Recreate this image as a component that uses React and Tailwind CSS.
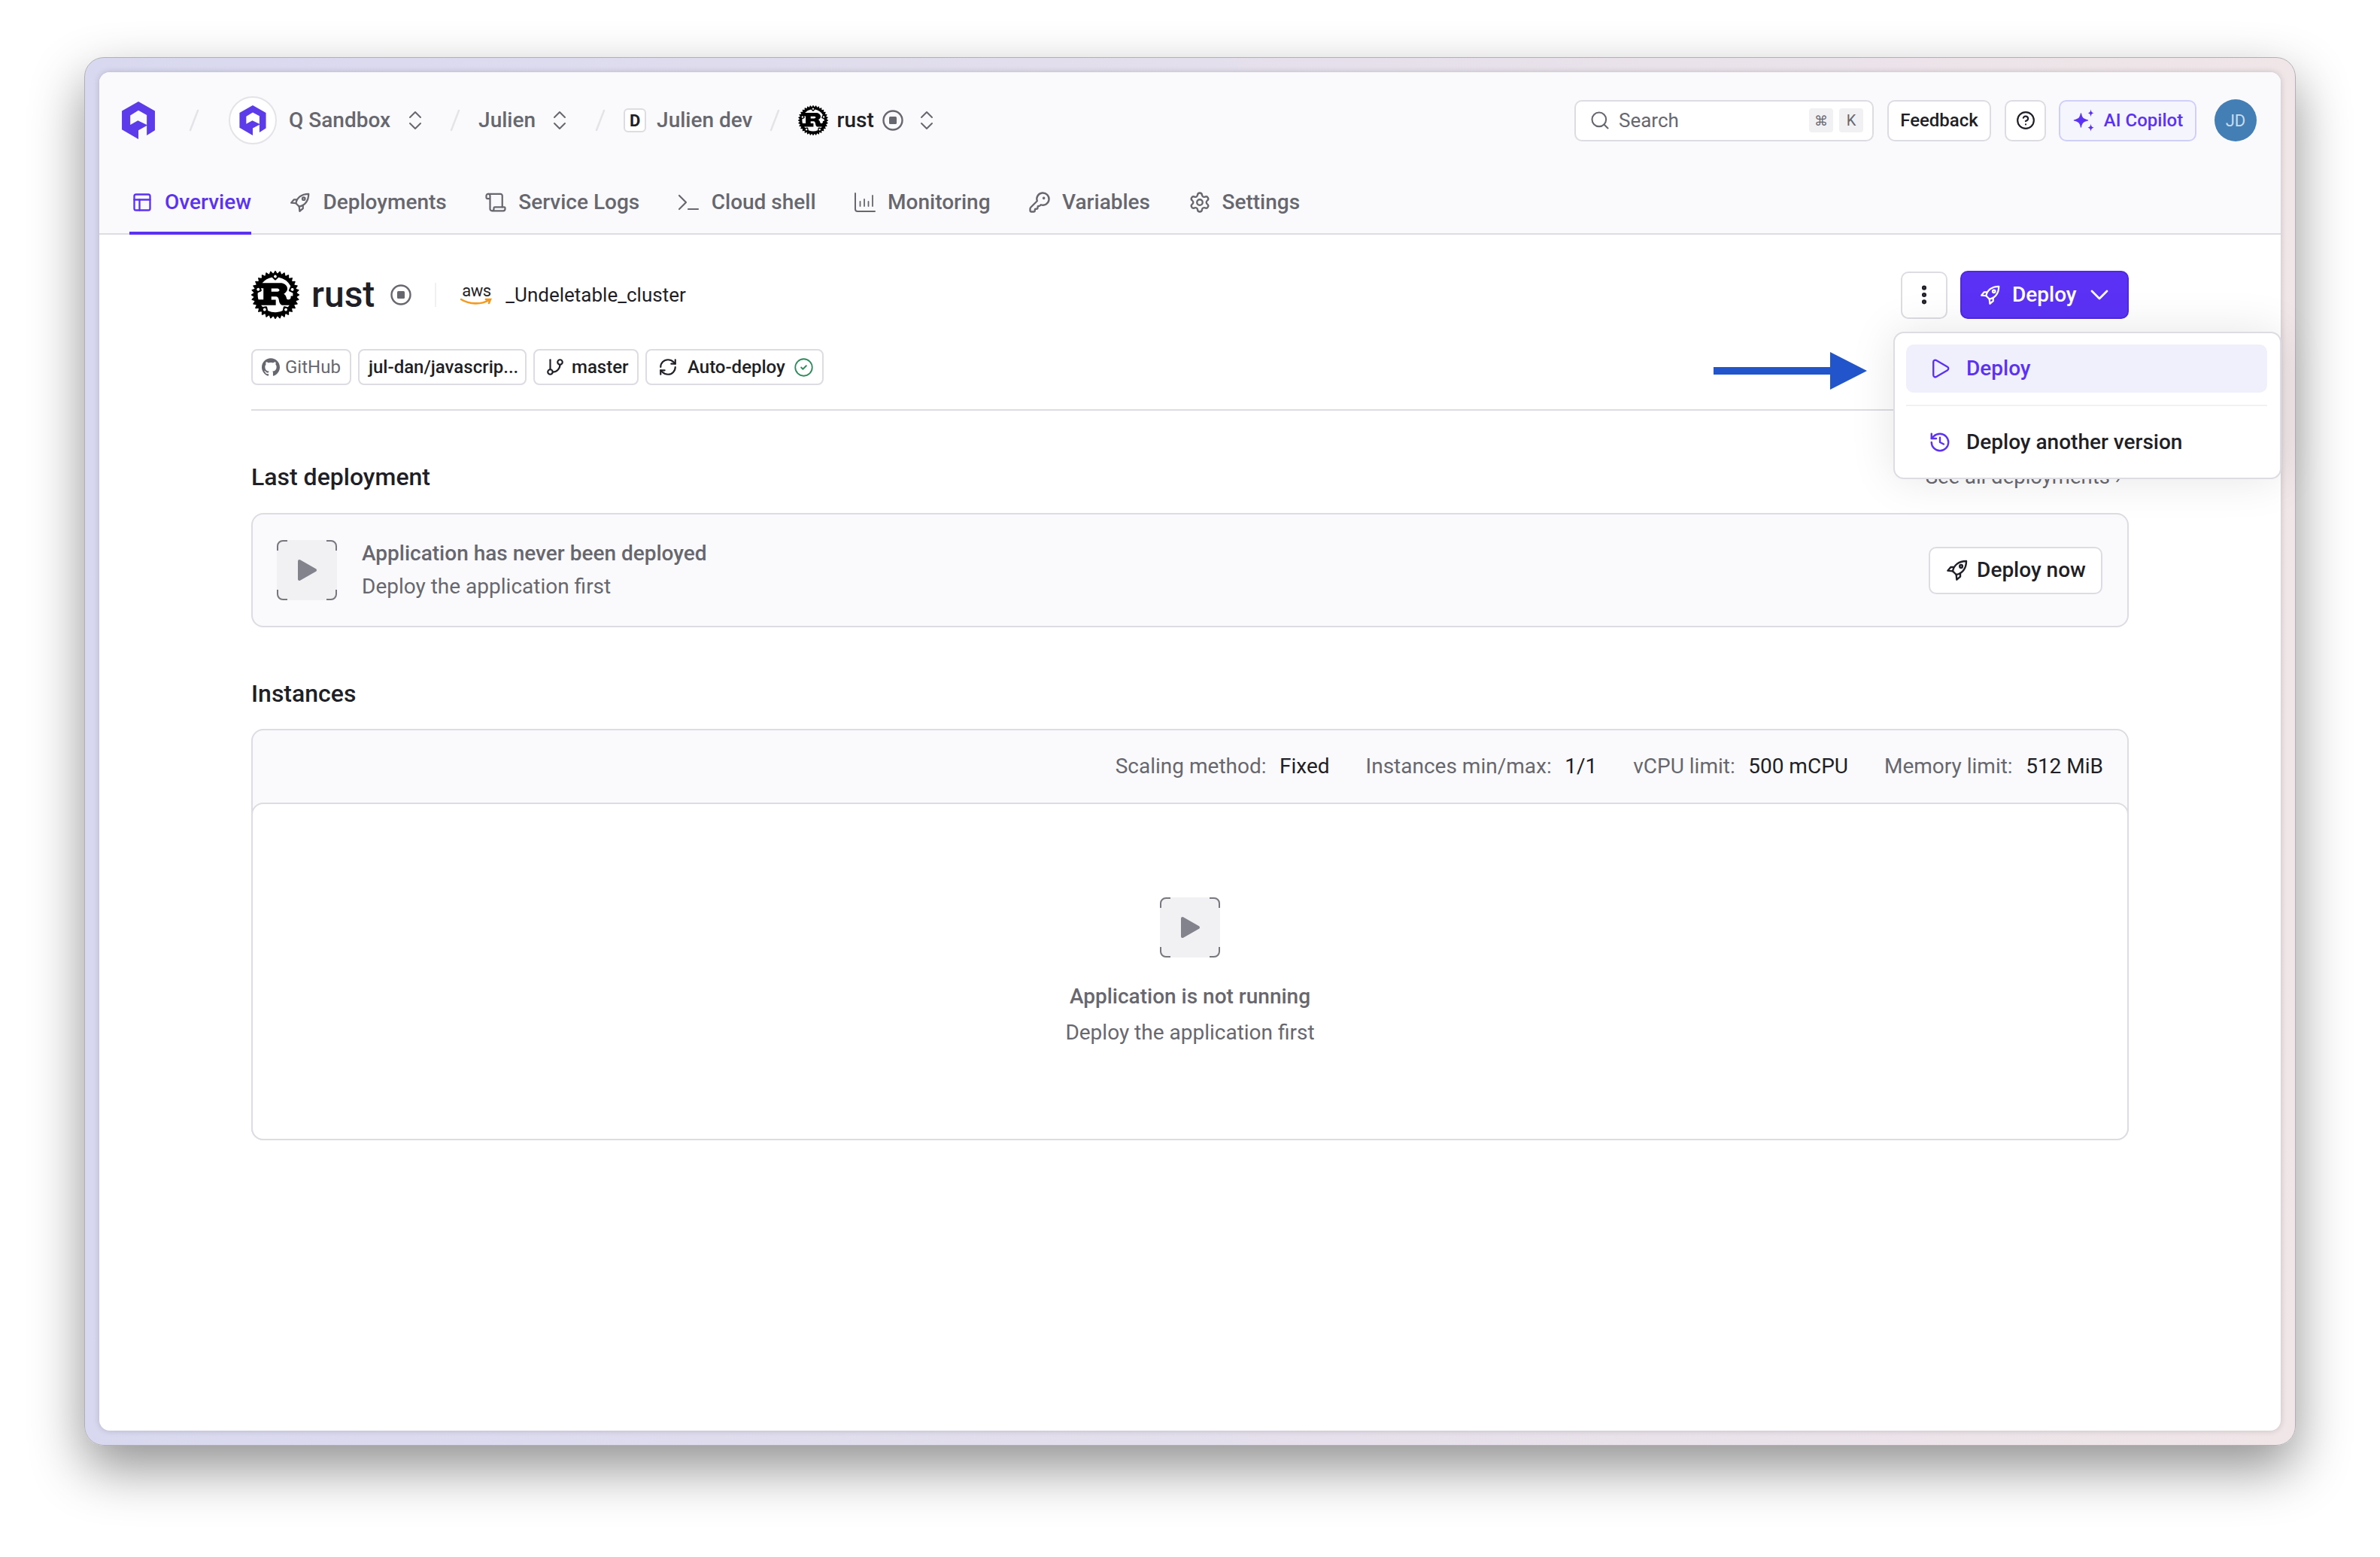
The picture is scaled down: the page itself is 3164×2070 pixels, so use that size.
import React from "react";
import { PanelsTopLeft, Scroll, KeyRound, Settings, Search, CircleHelp, EllipsisVertical, ChevronDown, GitBranch, RefreshCw, CircleCheck, Play, History } from "lucide-react";
import { SiRust, SiGithub } from "react-icons/si";

const font = "[font-family:Roboto,'Liberation_Sans',sans-serif]";

function QLogo({ className }) {
  return (
    <svg viewBox="0 0 130 148" className={className} fill="#5b3bea">
      <path fillRule="evenodd" d="M65 0L130 37V113L98 133V95L65 113V148L0 110V37ZM65 35L98 53V92L63 75L33 92V55Z" />
    </svg>
  );
}
function Rocket({ className, color = "currentColor", sw = 2 }) {
  return (
    <svg viewBox="0 0 24 24" className={className} fill="none" stroke={color} strokeWidth={sw} strokeLinejoin="round" strokeLinecap="round">
      <path d="M9.5 15L7.5 13C8.5 7.5 13 3 21 3C21 11 16.5 15.5 11 16.5Z" />
      <circle cx="15.8" cy="8.2" r="1.4" />
      <path d="M8 9H5.5L2.5 12.5L7.5 13" />
      <path d="M15 15.8V18.5L11.5 21.5L11 16.5" />
    </svg>
  );
}
function Slash() {
  return (
    <svg viewBox="0 0 14 30" className="w-[14px] h-[30px] shrink-0" fill="none" stroke="#e4e4e8" strokeWidth="2.5" strokeLinecap="round">
      <path d="M12 2L2 28" />
    </svg>
  );
}
function UpDown() {
  return (
    <svg viewBox="0 0 18 26" className="w-[18px] h-[26px] shrink-0" fill="none" stroke="#67676f" strokeWidth="2" strokeLinecap="round" strokeLinejoin="round">
      <path d="M2 9L9 2L16 9M2 17L9 24L16 17" />
    </svg>
  );
}
function StopIcon() {
  return (
    <svg viewBox="0 0 28 28" className="w-[28px] h-[28px] shrink-0" fill="none">
      <circle cx="14" cy="14" r="12.5" stroke="#67676f" strokeWidth="2.4" />
      <rect x="9" y="9" width="10" height="10" rx="1.5" fill="#67676f" />
    </svg>
  );
}
function TerminalIcon({ className }) {
  return (
    <svg viewBox="0 0 30 24" className={className} fill="none" stroke="currentColor" strokeWidth="2.2" strokeLinecap="round" strokeLinejoin="round">
      <path d="M2 3L11 12L2 21M14 21H27" />
    </svg>
  );
}
function ChartIcon({ className }) {
  return (
    <svg viewBox="0 0 30 28" className={className} fill="none" stroke="currentColor" strokeWidth="2" strokeLinecap="round">
      <path d="M2 2V23A3 3 0 0 0 5 26H28" />
      <path d="M8.5 13V19M14 10V19M19.5 13V19M25 5V19" strokeWidth="1.8" />
    </svg>
  );
}
function Sparkle({ className }) {
  return (
    <svg viewBox="0 0 28 28" className={className} fill="#5b32f5">
      <path d="M10 6C10.8 11 12 12.5 18 14C12 15.5 10.8 17 10 22C9.2 17 8 15.5 2 14C8 12.5 9.2 11 10 6Z" stroke="#5b32f5" strokeWidth="1" strokeLinejoin="round" />
      <path d="M21.5 1C22 4 22.5 4.8 25 5.5C22.5 6.2 22 7 21.5 10C21 7 20.5 6.2 18 5.5C20.5 4.8 21 4 21.5 1Z" />
      <path d="M21.5 18C22 21 22.5 21.8 25 22.5C22.5 23.2 22 24 21.5 27C21 24 20.5 23.2 18 22.5C20.5 21.8 21 21 21.5 18Z" />
    </svg>
  );
}
function PlayBox() {
  return (
    <svg viewBox="0 0 80 80" className="w-[80px] h-[80px] shrink-0" fill="none">
      <rect width="80" height="80" rx="8" fill="#f1f0f3" />
      <path d="M1 14V8A7 7 0 0 1 8 1H14M66 1H72A7 7 0 0 1 79 8V14M79 66V72A7 7 0 0 1 72 79H66M14 79H8A7 7 0 0 1 1 72V66" stroke="#77777f" strokeWidth="2" />
      <path d="M30 28L51 40L30 52Z" fill="#83838d" stroke="#83838d" strokeWidth="4" strokeLinejoin="round" />
    </svg>
  );
}
function Tab({ icon, label, active }) {
  return (
    <div className={"flex h-[88px] items-center gap-[15px] border-b-4 pl-[2px] pt-[6px] " + (active ? "border-[#5b32f5] text-[#5b32f5]" : "border-transparent text-[#67676f]")}>
      <span className="flex w-[30px] justify-center">{icon}</span>
      <span className="text-[28px] font-medium leading-[40px]">{label}</span>
    </div>
  );
}
function Badge({ children, className = "" }) {
  return (
    <div className={"flex h-[48px] items-center rounded-[8px] border-2 border-[#dcdce2] bg-white text-[24px] text-[#1f1f27] font-medium " + className}>
      {children}
    </div>
  );
}
function Stat({ label, value }) {
  return (
    <div className="flex items-center gap-[17.5px] text-[28px] leading-[40px]">
      <span className="text-[#67676f]">{label}</span>
      <span className="text-[#1f1f27]">{value}</span>
    </div>
  );
}

export default function App() {
  return (
    <div className={"w-[3164px] h-[2070px] bg-white pl-[112px] pt-[76px] overflow-hidden " + font}>
      <div className="w-[2940px] h-[1846px] p-[19px] rounded-[26px] bg-linear-to-r from-[#d8d8f0] to-[#f0e6e8] border border-[#b0b0b4] shadow-[0_30px_70px_rgba(0,0,0,0.43)]">
        <div className="relative h-full rounded-[14px] bg-white shadow-[0_0_8px_rgba(0,0,0,0.18)] flex flex-col">
          <header className="h-[216px] shrink-0 rounded-t-[14px] bg-[#fafafc] border-b-2 border-[#dcdce2] flex flex-col">
            <div className="h-[128px] shrink-0 flex items-center pl-[30px] pr-[32px]">
              <QLogo className="w-[44px] h-[50px] shrink-0" />
              <div className="ml-[45px]"><Slash /></div>
              <div className="ml-[39px] w-[64px] h-[64px] rounded-full border-2 border-[#e4e4e8] bg-white flex items-center justify-center">
                <QLogo className="w-[36px] h-[40px]" />
              </div>
              <span className="ml-[16px] text-[28px] font-medium text-[#67676f]">Q Sandbox</span>
              <div className="ml-[24px]"><UpDown /></div>
              <div className="ml-[37px]"><Slash /></div>
              <span className="ml-[24px] text-[28px] font-medium text-[#67676f]">Julien</span>
              <div className="ml-[23px]"><UpDown /></div>
              <div className="ml-[38px]"><Slash /></div>
              <div className="ml-[24px] w-[30px] h-[32px] rounded-[6px] border-2 border-[#dcdce2] bg-white flex items-center justify-center text-[22px] font-bold text-[#1f1f27]">D</div>
              <span className="ml-[14px] text-[28px] font-medium text-[#67676f]">Julien dev</span>
              <div className="ml-[22px]"><Slash /></div>
              <SiRust className="ml-[24px] w-[40px] h-[40px] text-black shrink-0" />
              <span className="ml-[12px] text-[28px] font-medium text-[#1f1f27]">rust</span>
              <div className="ml-[11px]"><StopIcon /></div>
              <div className="ml-[22px]"><UpDown /></div>

              <div className="ml-auto flex items-center">
                <div className="w-[398px] h-[55px] rounded-[10px] border-2 border-[#dcdce2] bg-white flex items-center pl-[18px] pr-[12px]">
                  <Search className="w-[28px] h-[28px] text-[#67676f]" strokeWidth={1.8} />
                  <span className="ml-[11px] text-[26px] text-[#67676f]">Search</span>
                  <span className="ml-auto w-[32px] h-[32px] rounded-[4px] bg-[#f1f0f3] flex items-center justify-center text-[18px] text-[#67676f] [font-family:'DejaVu_Sans',sans-serif]">⌘</span>
                  <span className="ml-[8px] w-[32px] h-[32px] rounded-[4px] bg-[#f1f0f3] flex items-center justify-center text-[20px] text-[#67676f]">K</span>
                </div>
                <div className="ml-[18px] w-[138px] h-[55px] rounded-[10px] border-2 border-[#dcdce2] bg-white flex items-center justify-center text-[24px] font-medium text-[#1f1f27]">Feedback</div>
                <div className="ml-[18px] w-[55px] h-[55px] rounded-[10px] border-2 border-[#dcdce2] bg-white flex items-center justify-center">
                  <CircleHelp className="w-[26px] h-[26px] text-[#1f1f27]" strokeWidth={2} />
                </div>
                <div className="ml-[17px] w-[183px] h-[55px] rounded-[10px] border-2 border-[#cfcffa] bg-[#f5f5fe] flex items-center justify-center gap-[10px] text-[24px] font-medium text-[#5b32f5]">
                  <Sparkle className="w-[32px] h-[32px]" />
                  <span>AI Copilot</span>
                </div>
                <div className="ml-[24px] w-[56px] h-[56px] rounded-full bg-[#437eb4] flex items-center justify-center text-[22px] text-[#c9dcec]">JD</div>
              </div>
            </div>
            <nav className="flex gap-[48.5px] pl-[40px]">
              <Tab active label="Overview" icon={<PanelsTopLeft className="w-[28px] h-[28px]" strokeWidth={2} />} />
              <Tab label="Deployments" icon={<Rocket className="w-[30px] h-[30px]" sw={1.8} />} />
              <Tab label="Service Logs" icon={<Scroll className="w-[30px] h-[30px]" strokeWidth={1.8} />} />
              <Tab label="Cloud shell" icon={<TerminalIcon className="w-[30px] h-[24px]" />} />
              <Tab label="Monitoring" icon={<ChartIcon className="w-[30px] h-[28px]" />} />
              <Tab label="Variables" icon={<KeyRound className="w-[30px] h-[30px]" strokeWidth={1.9} />} />
              <Tab label="Settings" icon={<Settings className="w-[30px] h-[30px]" strokeWidth={1.9} />} />
            </nav>
          </header>

          <main className="flex-1 pl-[202px] pr-[202px] pt-[48px]">
            <div className="flex h-[64px] items-center">
              <SiRust className="w-[64px] h-[64px] text-black shrink-0" />
              <h1 className="ml-[16px] text-[48px] font-medium text-[#1f1f27] leading-[64px]">rust</h1>
              <div className="ml-[21px]"><StopIcon /></div>
              <div className="ml-[31px] w-[2px] h-[32px] bg-[#f0f0f3]" />
              <div className="ml-[32px] flex flex-col items-center w-[42px]">
                <span className="text-[22px] leading-[18px] text-[#1f1f27] tracking-[-0.5px]">aws</span>
                <svg viewBox="0 0 42 10" className="w-[42px] h-[10px]" fill="none" stroke="#f39a1f" strokeWidth="2.6" strokeLinecap="round">
                  <path d="M1 2C12 9 28 9 38 3M34 2L40 2L38 7" />
                </svg>
              </div>
              <span className="ml-[18px] text-[26px] text-[#1f1f27]">_Undeletable_cluster</span>
              <div className="ml-auto flex items-center gap-[17px]">
                <div className="w-[62px] h-[63px] rounded-[10px] border-2 border-[#dcdce2] bg-white flex items-center justify-center">
                  <EllipsisVertical className="w-[32px] h-[32px] text-[#1f1f27]" strokeWidth={2.6} />
                </div>
                <div className="w-[224px] h-[64px] rounded-[10px] border-2 border-[#4f28e0] bg-[#5b32f5] flex items-center pl-[23px] text-white">
                  <Rocket className="w-[30px] h-[30px]" sw={1.8} />
                  <span className="ml-[14px] text-[28px] font-medium">Deploy</span>
                  <ChevronDown className="ml-[10px] w-[40px] h-[40px]" strokeWidth={1.6} />
                </div>
              </div>
            </div>

            <div className="mt-[40px] flex gap-[9px]">
              <Badge className="w-[133px] pl-[12px] gap-[7px] font-normal">
                <SiGithub className="w-[24px] h-[24px] text-[#67676f]" />
                <span className="text-[#67676f]">GitHub</span>
              </Badge>
              <Badge className="w-[224px] pl-[12px]">jul-dan/javascrip...</Badge>
              <Badge className="w-[140px] pl-[14px] gap-[9px]">
                <GitBranch className="w-[26px] h-[26px]" strokeWidth={2} />
                <span>master</span>
              </Badge>
              <Badge className="w-[237px] pl-[15px] gap-[13px]">
                <RefreshCw className="w-[26px] h-[26px]" strokeWidth={2} />
                <span>Auto-deploy</span>
                <CircleCheck className="ml-[-2px] w-[27px] h-[27px] text-[#2e8b5c]" strokeWidth={1.6} />
              </Badge>
            </div>

            <div className="mt-[32px] h-[2px] bg-[#dcdce2]" />

            <div className="mt-[68px] flex h-[40px] items-center justify-between">
              <h2 className="text-[32px] font-medium text-[#1f1f27]">Last deployment</h2>
              <span className="mr-[10px] text-[27.5px] text-[#67676f]">See all deployments  ›</span>
            </div>

            <section className="mt-[28px] h-[152px] rounded-[16px] border-2 border-[#dcdce2] bg-[#fafafc] flex items-center pl-[32px] pr-[33px]">
              <PlayBox />
              <div className="ml-[33px] flex flex-col gap-[4px]">
                <div className="text-[28px] font-medium leading-[40px] text-[#67676f]">Application has never been deployed</div>
                <div className="text-[28px] leading-[40px] text-[#67676f]">Deploy the application first</div>
              </div>
              <div className="ml-auto w-[231px] h-[63px] rounded-[10px] border-2 border-[#dcdce2] bg-white flex items-center justify-center gap-[10px] text-[28px] font-medium text-[#1f1f27]">
                <Rocket className="w-[32px] h-[32px]" sw={1.8} />
                <span>Deploy now</span>
              </div>
            </section>

            <h2 className="mt-[68px] h-[40px] text-[32px] font-medium leading-[40px] text-[#1f1f27]">Instances</h2>

            <section className="mt-[27px] h-[547px] rounded-[16px] border-2 border-[#dcdce2] bg-[#fafafc] flex flex-col">
              <div className="h-[96px] shrink-0 flex items-center justify-end gap-[48px] pr-[32px]">
                <Stat label="Scaling method:" value="Fixed" />
                <Stat label="Instances min/max:" value="1/1" />
                <Stat label="vCPU limit:" value="500 mCPU" />
                <Stat label="Memory limit:" value="512 MiB" />
              </div>
              <div className="flex-1 -mx-[2px] -mb-[2px] rounded-[16px] border-2 border-[#dcdce2] bg-white flex flex-col items-center pt-[124px]">
                <PlayBox />
                <div className="mt-[32px] text-[28px] font-medium leading-[40px] text-[#67676f]">Application is not running</div>
                <div className="mt-[8px] text-[28px] leading-[40px] text-[#67676f]">Deploy the application first</div>
              </div>
            </section>
          </main>

          <svg viewBox="0 0 204 50" className="absolute left-[2146px] top-[372px] w-[204px] h-[50px]" fill="#2255cc">
            <path d="M0 20H155V0L204 25L155 50V30H0Z" />
          </svg>

          <div className="absolute left-[2385px] top-[345px] w-[516px] h-[196px] rounded-[14px] border-2 border-[#dcdce2] bg-white pt-[15px] pb-[15px] pl-[15px] pr-[17px] shadow-[0_0_60px_rgba(0,0,0,0.1)]">
            <div className="h-[64px] rounded-[10px] bg-[#eff0fc] flex items-center pl-[30px] gap-[20px] text-[28px] font-medium text-[#5b32f5]">
              <Play className="w-[30px] h-[30px]" strokeWidth={1.9} />
              <span>Deploy</span>
            </div>
            <div className="mt-[16px] h-[2px] bg-[#f1f0f3]" />
            <div className="mt-[16px] h-[64px] flex items-center pl-[30px] gap-[20px] text-[28px] font-medium text-[#1f1f27]">
              <History className="w-[30px] h-[30px] text-[#5b32f5]" strokeWidth={1.9} />
              <span>Deploy another version</span>
            </div>
          </div>
        </div>
      </div>
    </div>
  );
}
